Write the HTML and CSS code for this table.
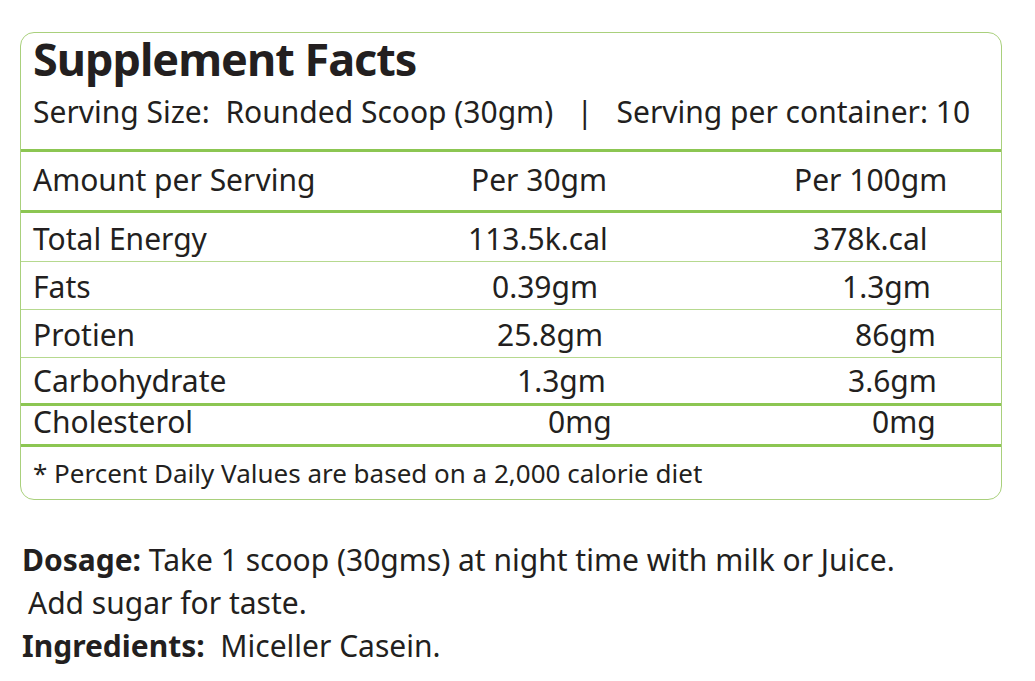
FILE: index.html
```html
<!DOCTYPE html>
<html lang="en">
<head>
<meta charset="utf-8">
<title>Supplement Facts</title>
<link rel="stylesheet" href="styles.css">
</head>
<body>
<section class="facts">
  <header class="facts-head">
    <h1 class="title">Supplement Facts</h1>
    <p class="serving">Serving Size:  Rounded Scoop (30gm)   |   Serving per container: 10</p>
  </header>
  <div class="row row-head">
    <span class="name">Amount per Serving</span>
    <span class="val o3">Per 30gm</span>
    <span class="val">Per 100gm</span>
  </div>
  <div class="row row-first">
    <span class="name">Total Energy</span>
    <span class="val">113.5k.cal</span>
    <span class="val o19">378k.cal</span>
  </div>
  <div class="row">
    <span class="name">Fats</span>
    <span class="val o24">0.39gm</span>
    <span class="val o48">1.3gm</span>
  </div>
  <div class="row">
    <span class="name">Protien</span>
    <span class="val o29">25.8gm</span>
    <span class="val o61">86gm</span>
  </div>
  <div class="row row-carb">
    <span class="name">Carbohydrate</span>
    <span class="val o49">1.3gm</span>
    <span class="val o54">3.6gm</span>
  </div>
  <div class="row row-chol">
    <span class="name">Cholesterol</span>
    <span class="val o80">0mg</span>
    <span class="val o78">0mg</span>
  </div>
  <p class="facts-note">* Percent Daily Values are based on a 2,000 calorie diet</p>
</section>
<div class="usage">
  <p class="line"><strong>Dosage:</strong> Take 1 scoop (30gms) at night time with milk or Juice.</p>
  <p class="line indent">Add sugar for taste.</p>
  <p class="line"><strong>Ingredients:</strong>&nbsp; Miceller Casein.</p>
</div>
</body>
</html>
```

FILE: styles.css
```css
* { box-sizing: border-box; }

body {
  margin: 0;
  background: #ffffff;
  color: #231f20;
  font-family: "Noto Sans", "Open Sans", "DejaVu Sans", sans-serif;
}

p, h1 { margin: 0; }

.facts {
  margin: 32px 0 0 20px;
  width: 982px;
  border: 1px solid #a9d07c;
  border-radius: 14px;
}

.facts-head {
  padding: 0 12px 19px;
  border-bottom: 3px solid #8cc652;
}

.title {
  margin: -6px 0;
  font-size: 45px;
  font-weight: 700;
  line-height: 63px;
  letter-spacing: -1px;
}

.serving {
  margin-top: 10px;
  font-size: 30px;
  line-height: 36px;
  white-space: pre;
}

.row {
  display: grid;
  grid-template-columns: 435px 326px 1fr;
  padding: 2px 12px 0;
  font-size: 30px;
  line-height: 45px;
  border-bottom: 1px solid #b6d98f;
  white-space: nowrap;
}

.row-head {
  padding: 0 12px 3px;
  line-height: 55px;
  border-bottom: 3px solid #8cc652;
}

.row-first {
  padding-top: 3px;
  line-height: 45px;
}

.row-carb {
  padding-top: 0;
  line-height: 45px;
  border-bottom: 3px solid #8cc652;
}

.row-chol {
  padding: 0 12px 7px;
  line-height: 31px;
  border-bottom: 3px solid #8cc652;
}

.o3 { padding-left: 3px; }
.o19 { padding-left: 19px; }
.o24 { padding-left: 24px; }
.o29 { padding-left: 29px; }
.o48 { padding-left: 48px; }
.o49 { padding-left: 49px; }
.o54 { padding-left: 54px; }
.o61 { padding-left: 61px; }
.o78 { padding-left: 78px; }
.o80 { padding-left: 80px; }

.facts-note {
  padding: 3px 12px 3px;
  font-size: 26px;
  line-height: 46px;
}

.usage {
  margin: 38px 0 0 22px;
}

.line {
  font-size: 30px;
  line-height: 43px;
}

.line strong {
  font-weight: 700;
}

.indent {
  padding-left: 6px;
}
```
